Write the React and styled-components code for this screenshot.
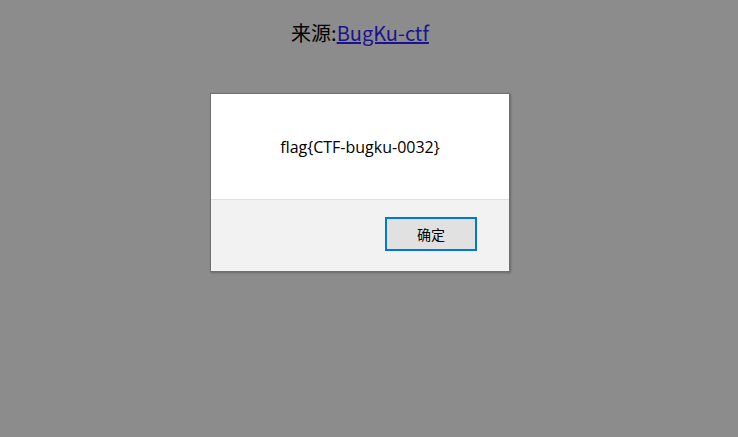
import React from "react";
import styled, { createGlobalStyle } from "styled-components";

const Global = createGlobalStyle`
  html, body { margin: 0; padding: 0; background: #8c8c8c; }
  body { font-family: "Noto Sans CJK SC", "Noto Sans", sans-serif; }
`;

const Page = styled.div`
  width: 720px;
  height: 437px;
  position: relative;
`;

const Title = styled.div`
  text-align: center;
  font-size: 20px;
  line-height: 28px;
  padding-top: 19px;
  color: #000;
`;

const Link = styled.a`
  color: #1a148c;
  text-decoration: underline;
`;

const Overlay = styled.div`
  position: absolute;
  left: 0;
  right: 0;
  top: 93px;
  display: flex;
  justify-content: center;
`;

const Dialog = styled.div`
  width: 298px;
  border: 1px solid #6f6f6f;
  background: #f2f2f2;
  box-shadow: 1px 1px 2px rgba(0, 0, 0, 0.25);
  display: flex;
  flex-direction: column;
  font-family: "Open Sans", "Noto Sans", "Noto Sans CJK SC", sans-serif;
`;

const Body = styled.div`
  height: 106px;
  background: #fff;
  border-bottom: 1px solid #dfdfdf;
  display: flex;
  align-items: center;
  justify-content: center;
  font-size: 16px;
  color: #000;
  box-sizing: border-box;
`;

const Footer = styled.div`
  height: 71px;
  display: flex;
  justify-content: flex-end;
  align-items: flex-start;
  padding: 17px 32px 0 0;
  box-sizing: border-box;
`;

const Button = styled.button`
  width: 92px;
  height: 34px;
  border: 2px solid #0078d7;
  background: #e1e1e1;
  font-family: "Noto Sans CJK SC", sans-serif;
  font-size: 14px;
  color: #000;
  padding: 0;
  cursor: pointer;
`;

export default function App() {
  return (
    <Page>
      <Global />
      <Title>
        来源:<Link href="#">BugKu-ctf</Link>
      </Title>
      <Overlay>
        <Dialog>
          <Body>flag{"{"}CTF-bugku-0032{"}"}</Body>
          <Footer>
            <Button>确定</Button>
          </Footer>
        </Dialog>
      </Overlay>
    </Page>
  );
}
